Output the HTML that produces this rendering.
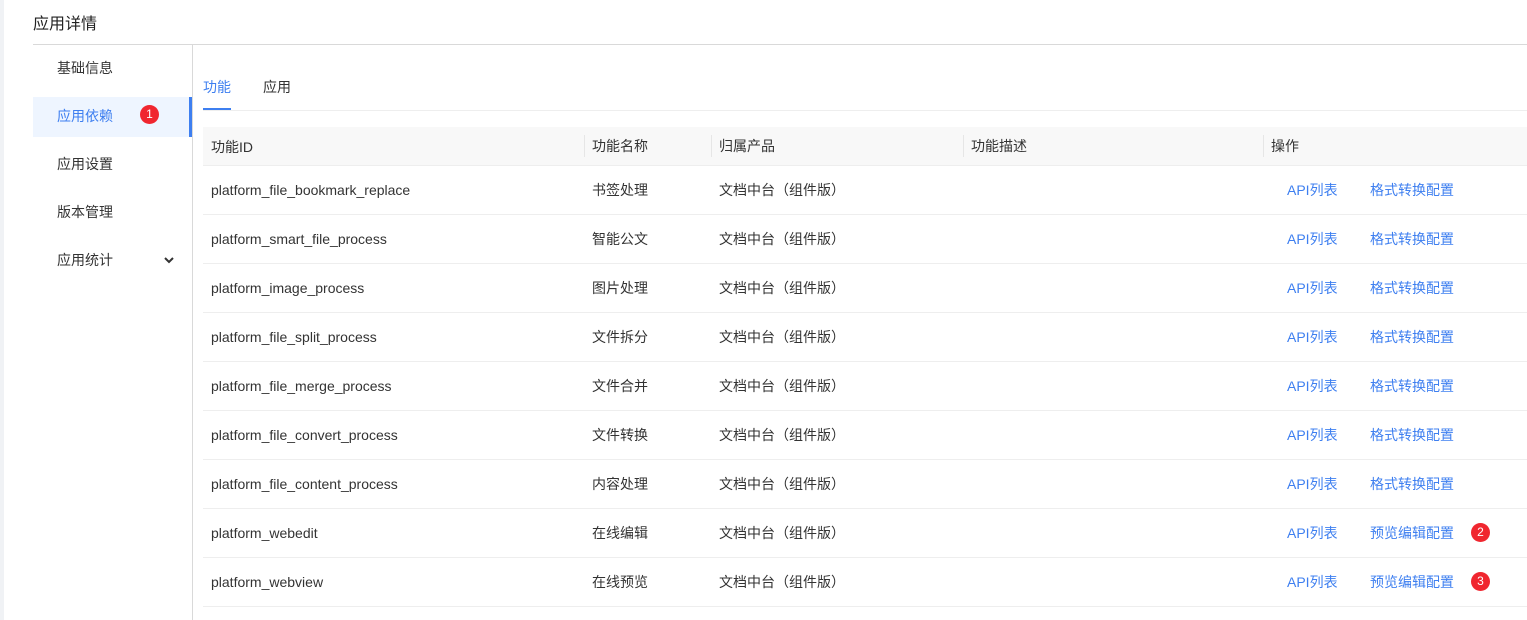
<!DOCTYPE html>
<html><head><meta charset="utf-8"><style>
*{margin:0;padding:0;box-sizing:border-box}
body{width:1527px;height:620px;background:#fff;font-family:"Liberation Sans","Noto Sans CJK SC",sans-serif;font-size:14px;color:#333;position:relative;overflow:hidden}
.strip{position:absolute;left:0;top:0;width:4px;height:620px;background:#f0f2f5}
.title{position:absolute;left:33px;top:10px;font-size:16px;color:#222}
.hline{position:absolute;left:33px;top:44px;width:1494px;height:1px;background:#d9d9d9}
.vline{position:absolute;left:192px;top:45px;width:1px;height:575px;background:#d9d9d9}
.nav{position:absolute;left:33px;width:159px;height:40px;line-height:38px;padding-left:24px;color:#333}
.nav.act{background:#eef5ff;color:#3e7ff0;border-right:3px solid #3e7ff0}
.badge{position:absolute;width:19px;height:19px;border-radius:50%;background:#f0262f;color:#fff;font-size:12px;text-align:center;line-height:19px}
.tab{position:absolute;top:77px;font-size:14px}
.tabline{position:absolute;left:203px;top:110px;width:1324px;height:1px;background:#eee}
.tabul{position:absolute;left:203px;top:108px;width:28px;height:2px;background:#3e7ff0}
.thead{position:absolute;left:203px;top:127px;width:1324px;height:39px;background:#f8f8f8;border-bottom:1px solid #eee}
.sep{position:absolute;top:135px;width:1px;height:22px;background:#e6e6e6}
.c{position:absolute;white-space:nowrap}
.z{margin-top:-2px}
.row{position:absolute;left:203px;width:1324px;height:1px;background:#eee}
.link{color:#3e7ff0}
</style></head><body>
<div class="strip"></div>
<div class="title">应用详情</div>
<div class="hline"></div>
<div class="vline"></div>
<div class="nav" style="top:49px">基础信息</div>
<div class="nav act" style="top:97px">应用依赖</div>
<div class="badge" style="left:140px;top:105px">1</div>
<div class="nav" style="top:145px">应用设置</div>
<div class="nav" style="top:193px">版本管理</div>
<div class="nav" style="top:241px">应用统计</div>
<svg style="position:absolute;left:163px;top:255px" width="12" height="10"><path d="M2 3l4 4 4-4" stroke="#333" stroke-width="2" fill="none"/></svg>
<div class="tab" style="left:203px;color:#3e7ff0">功能</div>
<div class="tab" style="left:263px">应用</div>
<div class="tabline"></div><div class="tabul"></div>
<div class="thead"></div>
<div class="sep" style="left:584px"></div><div class="sep" style="left:711px"></div><div class="sep" style="left:963px"></div><div class="sep" style="left:1263px"></div>
<div class="c" style="left:211px;top:137px">功能ID</div>
<div class="c" style="left:592px;top:136px">功能名称</div>
<div class="c" style="left:719px;top:136px">归属产品</div>
<div class="c" style="left:971px;top:136px">功能描述</div>
<div class="c" style="left:1271px;top:136px">操作</div>
<div id="rows"></div>
<script>
var d=[["platform_file_bookmark_replace","书签处理","格式转换配置"],["platform_smart_file_process","智能公文","格式转换配置"],["platform_image_process","图片处理","格式转换配置"],["platform_file_split_process","文件拆分","格式转换配置"],["platform_file_merge_process","文件合并","格式转换配置"],["platform_file_convert_process","文件转换","格式转换配置"],["platform_file_content_process","内容处理","格式转换配置"],["platform_webedit","在线编辑","预览编辑配置"],["platform_webview","在线预览","预览编辑配置"]];
var h="";d.forEach(function(r,i){var t=166+i*49,y=t+16,z=y-2;
h+='<div class="c" style="left:211px;top:'+y+'px">'+r[0]+'</div><div class="c" style="left:592px;top:'+z+'px">'+r[1]+'</div><div class="c" style="left:719px;top:'+z+'px">文档中台（组件版）</div><div class="c link" style="left:1287px;top:'+z+'px">API列表</div><div class="c link" style="left:1370px;top:'+z+'px">'+r[2]+'</div><div class="row" style="top:'+(t+48)+'px"></div>';
if(i>=7)h+='<div class="badge" style="left:1471px;top:'+(t+14)+'px">'+(i-5)+'</div>';});
document.getElementById("rows").innerHTML=h;
</script>
</body></html>
